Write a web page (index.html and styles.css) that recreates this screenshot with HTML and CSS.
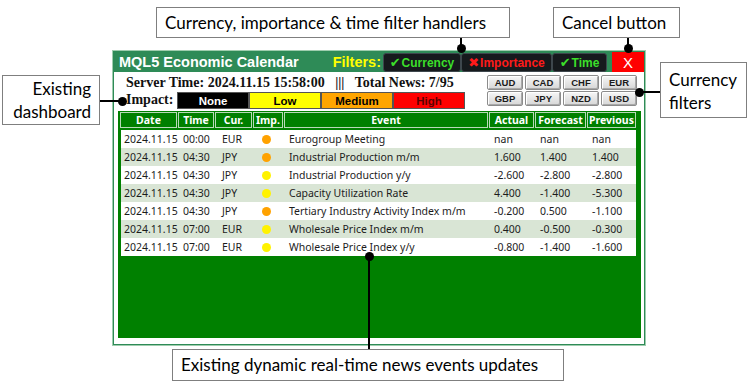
FILE: index.html
```html
<!DOCTYPE html>
<html lang="en">

<head>
    <meta charset="UTF-8">
    <meta name="viewport" content="width=device-width, initial-scale=1.0">
    <title>MQL5 Economic Calendar - Filters</title>
    <link rel="stylesheet" href="styles.css">
</head>

<body>
    <div class="stage">

        <!-- Dashboard panel -->
        <div class="panel">
            <div class="titlebar">
                <div class="title">MQL5 Economic Calendar</div>
                <div class="filters">
                    <span class="filters-label">Filters:</span>
                    <button class="filter-btn on w-cur"><span class="mark">&#10004;</span>Currency</button>
                    <button class="filter-btn off w-imp"><span class="mark">&#10006;</span>Importance</button>
                    <button class="filter-btn on w-time"><span class="mark">&#10004;</span>Time</button>
                </div>
                <button class="close-btn">X</button>
            </div>

            <div class="info">
                <div class="info-left">
                    <div class="server-time">Server Time: 2024.11.15 15:58:00 &nbsp; ||| &nbsp; Total News: 7/95</div>
                    <div class="impact-row">
                        <span class="impact-label">Impact:</span>
                        <span class="impact none">None</span>
                        <span class="impact low">Low</span>
                        <span class="impact medium">Medium</span>
                        <span class="impact high">High</span>
                    </div>
                </div>
                <div class="currencies">
                    <button class="cur-btn">AUD</button>
                    <button class="cur-btn">CAD</button>
                    <button class="cur-btn">CHF</button>
                    <button class="cur-btn">EUR</button>
                    <button class="cur-btn">GBP</button>
                    <button class="cur-btn">JPY</button>
                    <button class="cur-btn">NZD</button>
                    <button class="cur-btn">USD</button>
                </div>
            </div>

            <div class="table-area">
                <div class="thead">
                    <div class="th">Date</div>
                    <div class="th">Time</div>
                    <div class="th">Cur.</div>
                    <div class="th">Imp.</div>
                    <div class="th">Event</div>
                    <div class="th">Actual</div>
                    <div class="th">Forecast</div>
                    <div class="th">Previous</div>
                </div>
                <div class="tbody">
                    <div class="row">
                        <span class="td date">2024.11.15</span><span class="td">00:00</span><span class="td cur">EUR</span>
                        <span class="td imp"><i class="dot orange"></i></span><span class="td">Eurogroup Meeting</span>
                        <span class="td">nan</span><span class="td">nan</span><span class="td">nan</span>
                    </div>
                    <div class="row">
                        <span class="td date">2024.11.15</span><span class="td">04:30</span><span class="td cur">JPY</span>
                        <span class="td imp"><i class="dot orange"></i></span><span class="td">Industrial Production m/m</span>
                        <span class="td">1.600</span><span class="td">1.400</span><span class="td">1.400</span>
                    </div>
                    <div class="row">
                        <span class="td date">2024.11.15</span><span class="td">04:30</span><span class="td cur">JPY</span>
                        <span class="td imp"><i class="dot yellow"></i></span><span class="td">Industrial Production y/y</span>
                        <span class="td">-2.600</span><span class="td">-2.800</span><span class="td">-2.800</span>
                    </div>
                    <div class="row">
                        <span class="td date">2024.11.15</span><span class="td">04:30</span><span class="td cur">JPY</span>
                        <span class="td imp"><i class="dot yellow"></i></span><span class="td">Capacity Utilization Rate</span>
                        <span class="td">4.400</span><span class="td">-1.400</span><span class="td">-5.300</span>
                    </div>
                    <div class="row">
                        <span class="td date">2024.11.15</span><span class="td">04:30</span><span class="td cur">JPY</span>
                        <span class="td imp"><i class="dot orange"></i></span><span class="td">Tertiary Industry Activity Index m/m</span>
                        <span class="td">-0.200</span><span class="td">0.500</span><span class="td">-1.100</span>
                    </div>
                    <div class="row">
                        <span class="td date">2024.11.15</span><span class="td">07:00</span><span class="td cur">EUR</span>
                        <span class="td imp"><i class="dot yellow"></i></span><span class="td">Wholesale Price Index m/m</span>
                        <span class="td">0.400</span><span class="td">-0.500</span><span class="td">-0.300</span>
                    </div>
                    <div class="row">
                        <span class="td date">2024.11.15</span><span class="td">07:00</span><span class="td cur">EUR</span>
                        <span class="td imp"><i class="dot yellow"></i></span><span class="td">Wholesale Price Index y/y</span>
                        <span class="td">-0.800</span><span class="td">-1.400</span><span class="td">-1.600</span>
                    </div>
                </div>
            </div>
        </div>

        <!-- Callouts -->
        <div class="note note-filters">Currency, importance &amp; time filter handlers</div>
        <div class="note note-cancel">Cancel button</div>
        <div class="note note-dash">Existing<br>dashboard</div>
        <div class="note note-cur">Currency<br>filters</div>
        <div class="note note-news">Existing dynamic real-time news events updates</div>

        <div class="line v line-filters"></div>
        <div class="line v line-cancel"></div>
        <div class="line h line-dash"></div>
        <div class="line h line-cur"></div>
        <div class="line v line-news"></div>

        <i class="pin pin-filters"></i>
        <i class="pin pin-cancel"></i>
        <i class="pin pin-dash"></i>
        <i class="pin pin-cur"></i>
        <i class="pin pin-news"></i>
    </div>
</body>

</html>
```

FILE: styles.css
```css
body {
    margin: 0;
    background-color: #fff;
    font-family: "Liberation Sans", Arial, sans-serif;
}

.stage {
    position: relative;
    width: 749px;
    height: 387px;
    overflow: hidden;
    padding-top: 51px;
    box-sizing: border-box;
}

button {
    font-family: inherit;
    padding: 0;
    margin: 0;
}

/* Dashboard panel */
.panel {
    margin-left: 113px;
    width: 532px;
    height: 294px;
    box-sizing: border-box;
    border: 1px solid #2E8B57;
    box-shadow: 0 0 0 1px #9fcdae;
    background-color: #fff;
    display: flex;
    flex-direction: column;
}

.titlebar {
    display: flex;
    align-items: stretch;
    height: 20px;
    background-color: #2E8B57;
}

.title {
    color: #fff;
    font-weight: bold;
    font-size: 14.5px;
    line-height: 20px;
    padding-left: 5px;
}

.filters {
    display: flex;
    align-items: flex-end;
    margin-left: auto;
}

.filters-label {
    color: #FFFF00;
    font-weight: bold;
    font-size: 14.5px;
    line-height: 20px;
    margin-right: 2px;
    align-self: center;
}

.filter-btn {
    height: 19px;
    background-color: #161a1d;
    border: 1px solid #3e474d;
    border-radius: 3px;
    font-size: 12px;
    font-weight: bold;
    display: flex;
    align-items: center;
    justify-content: center;
    gap: 1px;
}

.filter-btn.on {
    color: #3CDF2A;
}

.filter-btn.off {
    color: #FF1A1A;
}

.filter-btn .mark {
    font-family: "DejaVu Sans", sans-serif;
    font-size: 13px;
}

.w-cur {
    width: 78px;
}

.w-imp {
    width: 91px;
}

.w-time {
    width: 55px;
}

.close-btn {
    width: 32px;
    margin-left: 5px;
    border: none;
    background-color: #FF0000;
    color: #fff;
    font-size: 15px;
}

/* Server time, impact and currency filters */
.info {
    display: flex;
    justify-content: space-between;
    align-items: flex-start;
    padding: 3px 7px 2px 12px;
}

.server-time,
.impact-label {
    font-family: "Liberation Serif", "Times New Roman", serif;
    font-weight: bold;
    font-size: 14px;
    color: #111;
}

.server-time {
    line-height: 16px;
}

.impact-row {
    display: flex;
    align-items: stretch;
    height: 17px;
    margin-top: 1px;
}

.impact-label {
    width: 51px;
    line-height: 15px;
}

.impact {
    width: 70px;
    border: 1px solid #555;
    font-size: 11.5px;
    font-weight: bold;
    text-align: center;
    line-height: 16px;
}

.impact.none {
    background-color: #000;
    color: #fff;
}

.impact.low {
    background-color: #FFFF00;
    color: #000;
}

.impact.medium {
    background-color: #FFA500;
    color: #000;
}

.impact.high {
    background-color: #FF0000;
    color: #5a0000;
}

.currencies {
    display: grid;
    grid-template-columns: repeat(4, 36px);
    grid-auto-rows: 15px;
    gap: 1px 2px;
}

.cur-btn {
    background: linear-gradient(#f7f7f7, #d6d6d6);
    border: 1px solid #8c8c8c;
    border-radius: 2px;
    box-shadow: inset 1px 1px 0 #fff, inset -1px -1px 0 #a9a9a9;
    font-size: 9.5px;
    font-weight: bold;
    color: #1b1b1b;
}

/* News table */
.table-area {
    flex: 1;
    margin: 0 3px 6px 4px;
    padding: 1px 2px 0 2px;
    background-color: #008000;
    font-family: "Noto Sans", sans-serif;
}

.thead {
    display: grid;
    grid-template-columns: 57px 36px 37px 30px 204px 45px 51px 49px;
    gap: 1px;
    height: 16px;
}

.th {
    border: 1px solid #b9d9b9;
    color: #fff;
    font-weight: bold;
    font-size: 10.5px;
    line-height: 14px;
    text-align: center;
}

.tbody {
    margin: 2px 0 0 1px;
    width: 515px;
    background-color: #fff;
}

.row {
    display: grid;
    grid-template-columns: 57px 36px 37px 30px 204px 45px 51px 48px;
    gap: 1px;
    height: 18px;
    align-items: center;
    font-size: 10.5px;
    color: #1c1c1c;
}

.row:nth-child(even) {
    background-color: #d9e5d5;
}

.td {
    padding-left: 4px;
    white-space: nowrap;
}

.td.date {
    padding-left: 3px;
}

.td.cur {
    padding-left: 6px;
}

.td.imp {
    padding-left: 8px;
    display: flex;
}

.dot {
    width: 9px;
    height: 9px;
    border-radius: 50%;
}

.dot.orange {
    background-color: #FFA200;
}

.dot.yellow {
    background-color: #FFF200;
}

/* Callouts */
.note {
    position: absolute;
    box-sizing: border-box;
    border: 1px solid #7f7f7f;
    background-color: #fff;
    font-family: Lato, "Noto Sans", sans-serif;
    font-size: 17px;
    color: #000;
    padding: 0 8px;
}

.note-filters {
    left: 156px;
    top: 7px;
    width: 354px;
    height: 31px;
    line-height: 29px;
}

.note-cancel {
    left: 553px;
    top: 7px;
    width: 127px;
    height: 31px;
    line-height: 29px;
}

.note-dash {
    left: 2px;
    top: 75px;
    width: 98px;
    height: 50px;
    line-height: 23px;
    text-align: right;
    padding-top: 1px;
}

.note-cur {
    left: 660px;
    top: 62px;
    width: 87px;
    height: 56px;
    line-height: 23px;
    padding-top: 5px;
}

.note-news {
    left: 172px;
    top: 349px;
    width: 392px;
    height: 32px;
    line-height: 30px;
}

.line {
    position: absolute;
    background-color: #000;
}

.line.v {
    width: 2px;
}

.line.h {
    height: 2px;
}

.line-filters {
    left: 460px;
    top: 38px;
    height: 10px;
}

.line-cancel {
    left: 627px;
    top: 38px;
    height: 10px;
}

.line-dash {
    left: 100px;
    top: 100px;
    width: 22px;
}

.line-cur {
    left: 639px;
    top: 91px;
    width: 21px;
}

.line-news {
    left: 368px;
    top: 256px;
    height: 93px;
}

.pin {
    position: absolute;
    width: 9px;
    height: 9px;
    border-radius: 50%;
    background-color: #000;
}

.pin-filters {
    left: 457px;
    top: 44px;
}

.pin-cancel {
    left: 624px;
    top: 44px;
}

.pin-dash {
    left: 118px;
    top: 97px;
}

.pin-cur {
    left: 635px;
    top: 88px;
}

.pin-news {
    left: 365px;
    top: 252px;
}
```
